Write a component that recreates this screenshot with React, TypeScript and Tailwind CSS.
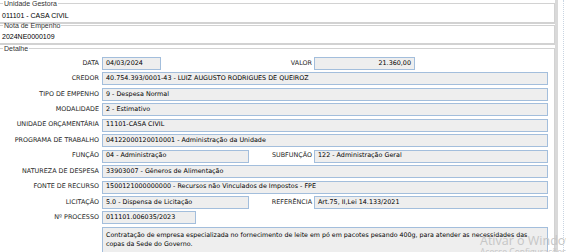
import React from "react";

type Row = {
    label: string;
    value: string;
    width?: string;
    right?: { label: string; value: string; width: string; alignRight?: boolean };
};

const rows: Row[] = [
    { label: "DATA", value: "04/03/2024", width: "w-[59px]", right: { label: "VALOR", value: "21.360,00", width: "w-[101px]", alignRight: true } },
    { label: "CREDOR", value: "40.754.393/0001-43 - LUIZ AUGUSTO RODRIGUES DE QUEIROZ" },
    { label: "TIPO DE EMPENHO", value: "9 - Despesa Normal" },
    { label: "MODALIDADE", value: "2 - Estimativo" },
    { label: "UNIDADE ORÇAMENTÁRIA", value: "11101-CASA CIVIL" },
    { label: "PROGRAMA DE TRABALHO", value: "04122000120010001 - Administração da Unidade" },
    { label: "FUNÇÃO", value: "04 - Administração", width: "w-[147px]", right: { label: "SUBFUNÇÃO", value: "122 - Administração Geral", width: "w-[234px]" } },
    { label: "NATUREZA DE DESPESA", value: "33903007 - Gêneros de Alimentação" },
    { label: "FONTE DE RECURSO", value: "1500121000000000 - Recursos não Vinculados de Impostos - FPE" },
    { label: "LICITAÇÃO", value: "5.0 - Dispensa de Licitação", width: "w-[147px]", right: { label: "REFERÊNCIA", value: "Art.75, II,Lei 14.133/2021", width: "w-[234px]" } },
    { label: "Nº PROCESSO", value: "011101.006035/2023", width: "w-[94px]" },
];

const Field = ({ value, width, alignRight }: { value: string; width: string; alignRight?: boolean }) => (
    <div className={`${width} h-[13px] shrink-0 border border-[#a3bedc] bg-[#eeeeee] flex items-center px-[3px] text-black whitespace-nowrap overflow-hidden ${alignRight ? 'justify-end' : ''}`}>
        {value}
    </div>
);

const GroupBox = ({ title, className, children }: { title: string; className: string; children: React.ReactNode }) => (
    <fieldset className={`border border-l-0 border-[#d2d2d2] border-b-2 ${className}`}>
        <legend className="ml-[3px] px-[1px] leading-[7px] text-[7px] text-[#333] font-['Liberation_Sans',sans-serif]">{title}</legend>
        {children}
    </fieldset>
);

const App = () => {
    return (
        <div className="relative w-[566px] h-[252px] overflow-hidden bg-white flex font-['DejaVu_Sans',sans-serif]">
            <div className="w-[555px] shrink-0 flex flex-col">
                <GroupBox title="Unidade Gestora" className="h-[23.5px] shrink-0">
                    <div className="pl-[2px] pt-[3.5px] leading-[9px] text-[7px] text-black font-['Liberation_Sans',sans-serif]">011101 - CASA CIVIL</div>
                </GroupBox>
                <GroupBox title="Nota de Empenho" className="h-[22.5px] shrink-0 -mt-[1.5px]">
                    <div className="pl-[2px] pt-[2.5px] leading-[9px] text-[7px] text-black font-['Liberation_Sans',sans-serif]">2024NE0000109</div>
                </GroupBox>
                <GroupBox title="Detalhe" className="flex-1 mt-[0.5px] border-b-0">
                    <div className="pt-[5px] flex flex-col gap-[2.45px] text-[6.4px]">
                        {rows.map((row) => (
                            <div key={row.label} className="flex items-center h-[13px]">
                                <div className="w-[99px] shrink-0 text-right text-[#1e1e1e] whitespace-nowrap">{row.label}</div>
                                {row.right ? (
                                    <>
                                        <div className="w-[151px] shrink-0 pl-[3px]">
                                            <Field value={row.value} width={row.width ?? ''} />
                                        </div>
                                        <div className="w-[62px] shrink-0 text-right text-[#1e1e1e] whitespace-nowrap">{row.right.label}</div>
                                        <div className="pl-[2px]">
                                            <Field value={row.right.value} width={row.right.width} alignRight={row.right.alignRight} />
                                        </div>
                                    </>
                                ) : (
                                    <div className="pl-[3px]">
                                        <Field value={row.value} width={row.width ?? 'w-[446px]'} />
                                    </div>
                                )}
                            </div>
                        ))}
                        <div className="flex">
                            <div className="w-[102px] shrink-0" />
                            <div className="w-[446px] h-[40px] border border-[#a3bedc] bg-[#eeeeee] px-[3px] pt-[2px] leading-[9.5px] text-[6.3px] text-black">
                                Contratação de empresa especializada no fornecimento de leite em pó em pacotes pesando 400g, para atender as necessidades das
                                <br />
                                copas da Sede do Governo.
                            </div>
                        </div>
                    </div>
                </GroupBox>
            </div>
            <div className="w-[3px] shrink-0 bg-[#d9d9d9]" />
            <div className="w-[5px] shrink-0" />
            <div className="w-[3px] shrink-0 border-l border-dotted border-[#c9d5e2]" />

            <div className="absolute left-[480px] top-[234px] text-[#c6c6c6] font-['Open_Sans',sans-serif] whitespace-nowrap">
                <div className="text-[12.5px] leading-[13px]">Ativar o Windows</div>
                <div className="text-[8.5px] leading-[10px]">Acesse Configurações para ativar o Windows.</div>
            </div>
        </div>
    );
};

export default App;
